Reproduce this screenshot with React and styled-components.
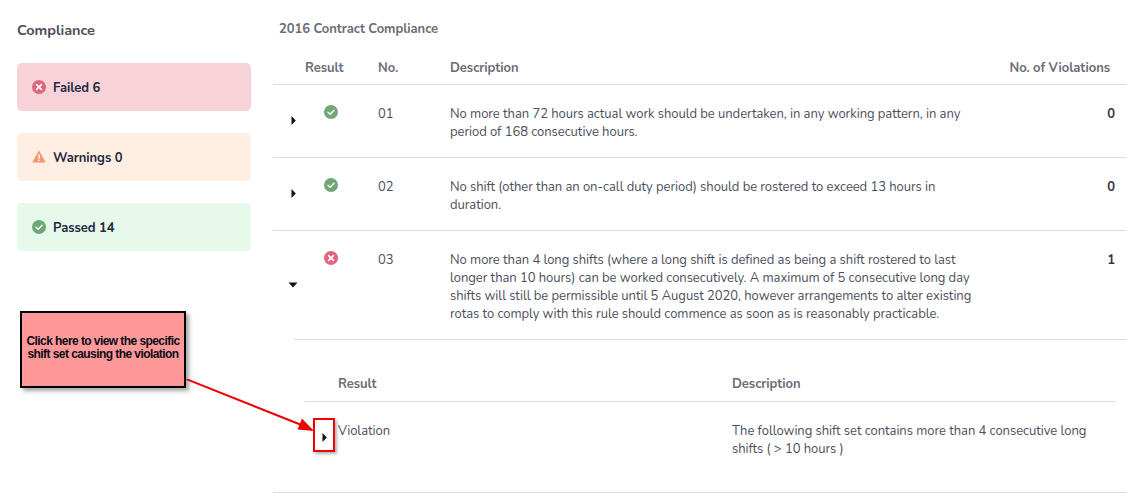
import React from "react";
import styled, { createGlobalStyle } from "styled-components";

const GlobalStyle = createGlobalStyle`
  html, body { margin: 0; padding: 0; background: #fff; }
  body { font-family: "Nunito", "Lato", "Noto Sans", sans-serif; color: #4d4f5c; }
`;

const RESULTS = [
  {
    no: "01",
    status: "pass",
    count: 0,
    text: "No more than 72 hours actual work should be undertaken, in any working pattern, in any period of 168 consecutive hours.",
  },
  {
    no: "02",
    status: "pass",
    count: 0,
    text: "No shift (other than an on-call duty period) should be rostered to exceed 13 hours in duration.",
  },
  {
    no: "03",
    status: "fail",
    count: 1,
    open: true,
    text: "No more than 4 long shifts (where a long shift is defined as being a shift rostered to last longer than 10 hours) can be worked consecutively. A maximum of 5 consecutive long day shifts will still be permissible until 5 August 2020, however arrangements to alter existing rotas to comply with this rule should commence as soon as is reasonably practicable.",
  },
];

const StatusIcon = ({ status }) => {
  if (status === "warn") {
    return (
      <svg width="14" height="13" viewBox="0 0 14 13">
        <path d="M7 0.5 L13.8 12.5 H0.2 Z" fill="#f4976c" />
        <rect x="6.3" y="4.4" width="1.4" height="4.4" fill="#fff" />
        <rect x="6.3" y="9.6" width="1.4" height="1.4" fill="#fff" />
      </svg>
    );
  }
  const fill = status === "fail" ? "#e0667f" : "#6fa878";
  return (
    <svg width="14" height="14" viewBox="0 0 14 14">
      <circle cx="7" cy="7" r="7" fill={fill} />
      {status === "fail" ? (
        <path d="M4.6 4.6 L9.4 9.4 M9.4 4.6 L4.6 9.4" stroke="#fff" strokeWidth="1.6" strokeLinecap="round" />
      ) : (
        <path d="M4 7.3 L6.2 9.3 L10 5.2" stroke="#fff" strokeWidth="1.5" fill="none" strokeLinecap="round" strokeLinejoin="round" />
      )}
    </svg>
  );
};

const Caret = ({ open }) =>
  open ? (
    <svg width="10" height="6" viewBox="0 0 10 6">
      <path d="M0.5 0.5 H9.5 L5 5.5 Z" fill="#111" />
    </svg>
  ) : (
    <svg width="5" height="9" viewBox="0 0 5 9">
      <path d="M0.5 0 L4.8 4.5 L0.5 9 Z" fill="#111" />
    </svg>
  );

const App = () => (
  <>
    <GlobalStyle />
    <Page>
      <Sidebar>
        <SideTitle>Compliance</SideTitle>
        <Card $bg="#f7d2d9">
          <StatusIcon status="fail" />
          <CardLabel>Failed 6</CardLabel>
        </Card>
        <Card $bg="#ffefe2">
          <StatusIcon status="warn" />
          <CardLabel>Warnings 0</CardLabel>
        </Card>
        <Card $bg="#e6f9ea">
          <StatusIcon status="pass" />
          <CardLabel>Passed 14</CardLabel>
        </Card>
      </Sidebar>
      <Main>
        <MainTitle>2016 Contract Compliance</MainTitle>
        <HeadRow>
          <span />
          <span>Result</span>
          <span>No.</span>
          <span>Description</span>
          <ViolationsHead>No. of Violations</ViolationsHead>
        </HeadRow>
        {RESULTS.map((r) => (
          <RowGroup key={r.no}>
            <Row>
              <CaretCell>
                <Caret open={r.open} />
              </CaretCell>
              <IconCell>
                <StatusIcon status={r.status} />
              </IconCell>
              <span>{r.no}</span>
              <Description>{r.text}</Description>
              <Count>{r.count}</Count>
            </Row>
            {r.open && (
              <Detail>
                <DetailHead>
                  <span />
                  <span>Result</span>
                  <span>Description</span>
                </DetailHead>
                <DetailRow>
                  <DetailCaret>
                    <Caret />
                  </DetailCaret>
                  <span>Violation</span>
                  <span>The following shift set contains more than 4 consecutive long shifts ( &gt; 10 hours )</span>
                </DetailRow>
              </Detail>
            )}
          </RowGroup>
        ))}
      </Main>
      <Callout>Click here to view the specific shift set causing the violation</Callout>
      <Arrow width="135" height="60" viewBox="0 0 135 60">
        <path d="M0 0 L118 47" stroke="#f00000" strokeWidth="2" />
        <path d="M128 52 L111.5 50.5 L116 39.5 Z" fill="#f00000" />
      </Arrow>
      <Highlight />
    </Page>
  </>
);

export default App;

const Page = styled.div`
  position: relative;
  width: 1145px;
  height: 501px;
  overflow: hidden;
  display: flex;
  align-items: flex-start;
  font-size: 13px;
  line-height: 18px;
  letter-spacing: -0.05px;
`;

const Sidebar = styled.aside`
  width: 234px;
  margin-left: 17px;
  padding-top: 20px;
  display: flex;
  flex-direction: column;
  gap: 21.5px;
`;

const SideTitle = styled.h2`
  margin: 0 0 1px;
  font-size: 14.5px;
  line-height: 20px;
  font-weight: 700;
  color: #4b4d5a;
`;

const Card = styled.div`
  height: 48.5px;
  box-sizing: border-box;
  padding-left: 15px;
  display: flex;
  align-items: center;
  gap: 7px;
  background: ${(p) => p.$bg};
  border-radius: 5px;
  font-size: 13px;
  font-weight: 700;
  color: #25283d;
`;

const CardLabel = styled.span`
  margin-top: 2px;
`;

const Main = styled.main`
  width: 853px;
  margin-left: 22px;
`;

const MainTitle = styled.h3`
  margin: 0;
  padding: 19px 0 0 6px;
  font-size: 13px;
  line-height: 20px;
  font-weight: 700;
  color: #6b6c76;
`;

const rowColumns = "32px 73px 72px 530px 1fr";

const HeadRow = styled.div`
  display: grid;
  grid-template-columns: ${rowColumns};
  padding: 20px 16px 7px 0;
  border-bottom: 1px solid #dcdcdc;
  font-weight: 700;
  color: #6b6c76;
`;

const ViolationsHead = styled.span`
  text-align: right;
  white-space: nowrap;
`;

const RowGroup = styled.div`
  border-bottom: 1px solid #dcdcdc;
`;

const Row = styled.div`
  display: grid;
  grid-template-columns: ${rowColumns};
  padding: 20px 11px 16px 0;
`;

const CaretCell = styled.span`
  align-self: center;
  justify-self: center;
  display: flex;
  padding: 0 0 5px 8px;
`;

const IconCell = styled.span`
  display: flex;
  padding: 0 0 0 19px;
`;

const Description = styled.span`
  color: #4d4f5c;
`;

const Count = styled.span`
  text-align: right;
  font-weight: 700;
  color: #33353f;
`;

const Detail = styled.section`
  margin-left: 21px;
  padding: 0 10px 34px 11px;
  border-top: 1px solid #dcdcdc;
`;

const detailColumns = "33px 394px 1fr";

const DetailHead = styled.div`
  display: grid;
  grid-template-columns: ${detailColumns};
  padding: 35px 0 8px;
  border-bottom: 1px solid #dcdcdc;
  font-weight: 700;
  color: #6b6c76;
`;

const DetailRow = styled.div`
  display: grid;
  grid-template-columns: ${detailColumns};
  padding: 20px 25px 0 0;
`;

const DetailCaret = styled.span`
  display: flex;
  padding: 11px 0 0 17px;
`;

const Callout = styled.div`
  position: absolute;
  left: 20px;
  top: 311px;
  width: 166px;
  height: 77px;
  box-sizing: border-box;
  padding: 0 2px 4px;
  display: flex;
  align-items: center;
  justify-content: center;
  text-align: center;
  background: #ff9999;
  border: 2px solid #000;
  box-shadow: 3px 3px 4px rgba(0, 0, 0, 0.35);
  font-family: "Liberation Sans", Arial, sans-serif;
  font-size: 12px;
  line-height: 12.5px;
  font-weight: 700;
  letter-spacing: -0.57px;
  color: #0a0a14;
`;

const Arrow = styled.svg`
  position: absolute;
  left: 186px;
  top: 379px;
`;

const Highlight = styled.div`
  position: absolute;
  left: 313px;
  top: 418px;
  width: 22px;
  height: 34px;
  box-sizing: border-box;
  border: 2.5px solid #ee0000;
  box-shadow: 2px 2px 3px rgba(0, 0, 0, 0.3);
`;
